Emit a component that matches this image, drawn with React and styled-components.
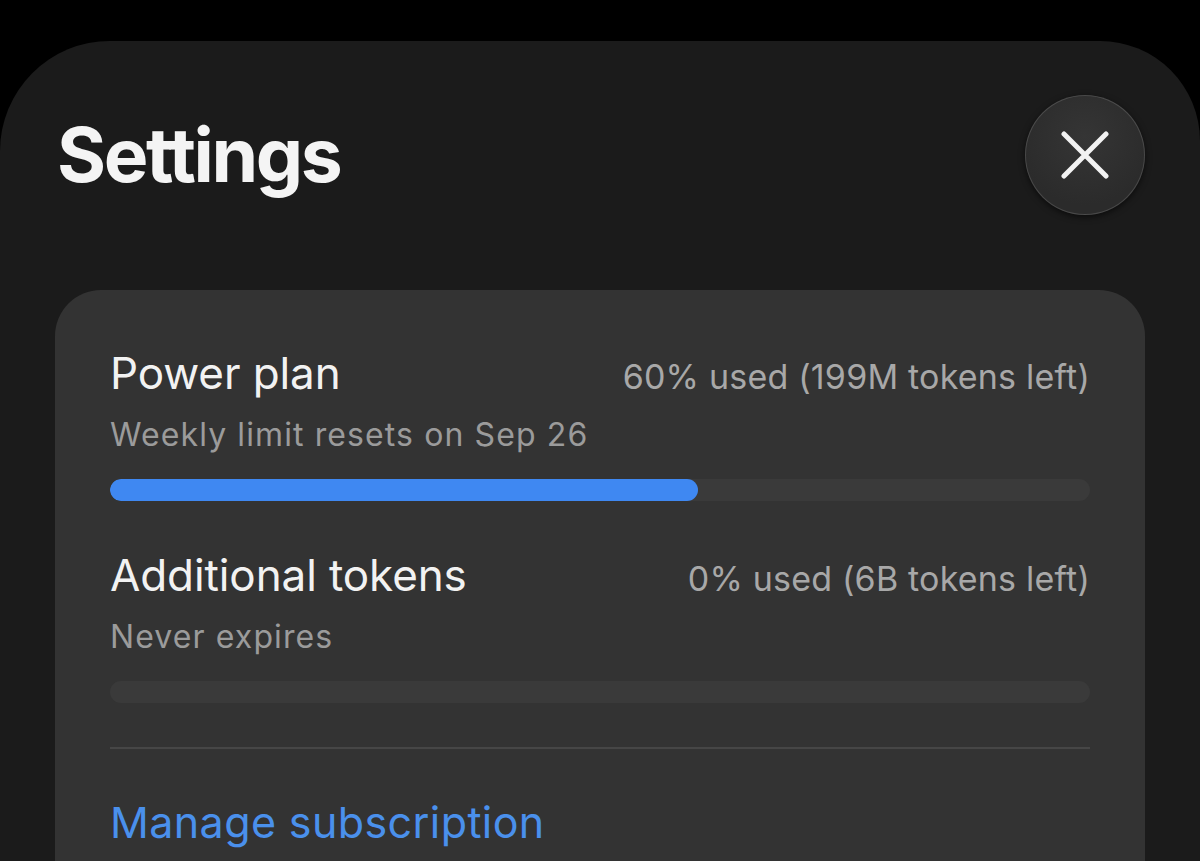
import React from "react";
import styled, { createGlobalStyle } from "styled-components";

const GlobalStyle = createGlobalStyle`
  html, body {
    margin: 0;
    padding: 0;
    background: #000;
    height: 100%;
    overflow: hidden;
  }
  body {
    font-family: Inter, "Noto Sans", "Liberation Sans", sans-serif;
    -webkit-font-smoothing: antialiased;
  }
`;

const Sheet = styled.div`
  margin-top: 41px;
  min-height: 900px;
  background: #1b1b1b;
  border-radius: 110px 100px 0 0;
  padding: 54px 55px 0 57px;
  box-sizing: border-box;
`;

const Header = styled.header`
  display: flex;
  align-items: center;
  justify-content: space-between;
  height: 120px;
`;

const Title = styled.h1`
  margin: 0;
  font-size: 75px;
  line-height: 76px;
  font-weight: 700;
  letter-spacing: -2.4px;
  color: #f4f4f4;
`;

const CloseButton = styled.button`
  width: 120px;
  height: 120px;
  border-radius: 50%;
  border: 1.5px solid rgba(255, 255, 255, 0.14);
  background: radial-gradient(circle at 50% 35%, #353535 0%, #2b2b2b 70%);
  box-shadow: 0 2px 6px rgba(0, 0, 0, 0.6);
  display: flex;
  align-items: center;
  justify-content: center;
  padding: 0;
  cursor: pointer;
`;

const Card = styled.section`
  margin-top: 75px;
  margin-left: -2px;
  background: #333333;
  border-radius: 46px;
  padding: 57px 55px 80px 55px;
  display: flex;
  flex-direction: column;
`;

const Row = styled.div`
  display: flex;
  align-items: baseline;
  justify-content: space-between;
  margin-top: ${(p) => p.$top || 0}px;
`;

const Label = styled.div`
  font-size: 44px;
  line-height: 52px;
  color: #f2f2f2;
  letter-spacing: -0.1px;
`;

const Usage = styled.div`
  font-size: 34px;
  line-height: 40px;
  color: #a8a8a8;
  letter-spacing: 0.2px;
`;

const Note = styled.div`
  margin-top: 16px;
  font-size: 32px;
  line-height: 40px;
  color: #9b9b9b;
  letter-spacing: 1.1px;
`;

const Track = styled.div`
  margin-top: 24px;
  height: 22px;
  border-radius: 11px;
  background: #3a3a3a;
  overflow: hidden;
`;

const Fill = styled.div`
  height: 100%;
  border-radius: 11px;
  background: #3f88f2;
`;

const Divider = styled.hr`
  margin: 44px 0 0;
  border: none;
  height: 2px;
  background: #464646;
`;

const ManageLink = styled.a`
  margin-top: 47px;
  font-size: 43px;
  line-height: 52px;
  color: #4a90ec;
  text-decoration: none;
  letter-spacing: 0.4px;
`;

const usage = [
  { name: "Power plan", used: "60% used (199M tokens left)", note: "Weekly limit resets on Sep 26", pct: 60 },
  { name: "Additional tokens", used: "0% used (6B tokens left)", note: "Never expires", pct: 0 },
];

export default function App() {
  return (
    <>
      <GlobalStyle />
      <Sheet>
        <Header>
          <Title>Settings</Title>
          <CloseButton aria-label="Close">
            <svg width="48" height="48" viewBox="0 0 48 48" fill="none">
              <path d="M3 3L45 45M45 3L3 45" stroke="#f2f2f2" strokeWidth="5" strokeLinecap="round" />
            </svg>
          </CloseButton>
        </Header>
        <Card>
          {usage.map((u, i) => (
            <div key={u.name}>
              <Row $top={i === 0 ? 0 : 48}>
                <Label>{u.name}</Label>
                <Usage>{u.used}</Usage>
              </Row>
              <Note>{u.note}</Note>
              <Track>
                <Fill style={{ width: `${u.pct}%` }} />
              </Track>
            </div>
          ))}
          <Divider />
          <ManageLink href="#">Manage subscription</ManageLink>
        </Card>
      </Sheet>
    </>
  );
}
